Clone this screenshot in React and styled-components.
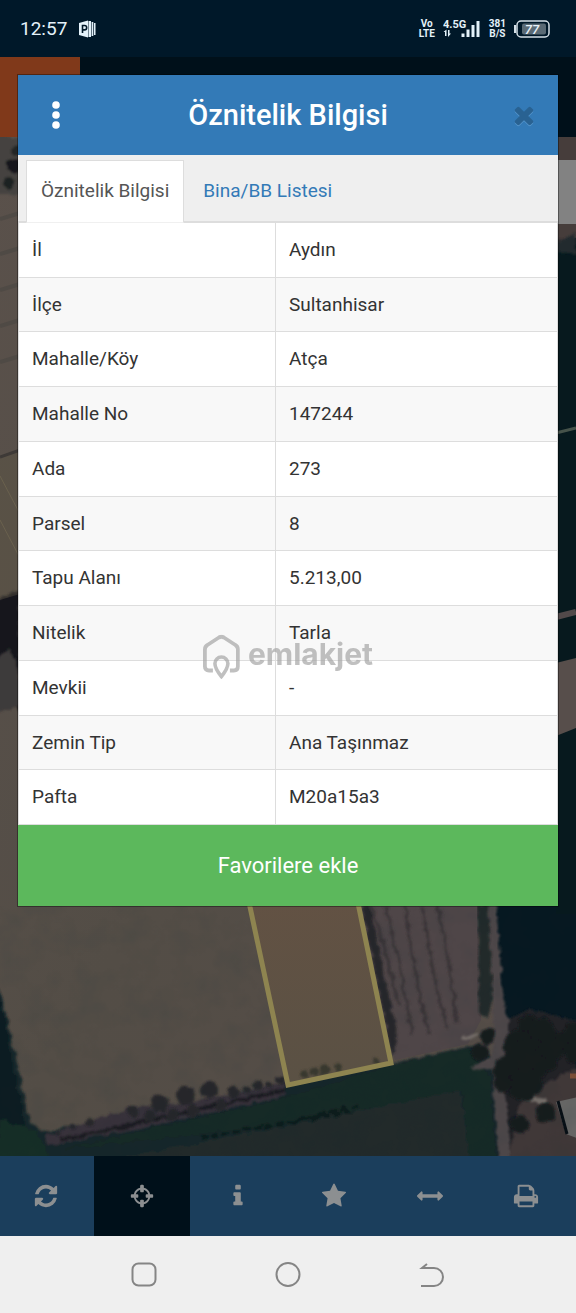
import React from "react";
import styled, { createGlobalStyle } from "styled-components";

const GlobalStyle = createGlobalStyle`
  *, *::before, *::after { box-sizing: border-box; }
  body { margin: 0; font-family: Roboto, "Noto Sans", sans-serif; color: #333; background: #001420; }
  button { font: inherit; border: 0; margin: 0; padding: 0; cursor: pointer; }
`;

const Screen = styled.div`
  position: relative;
  display: flex;
  flex-direction: column;
  min-height: 100vh;
`;

/* ---------- phone status bar ---------- */

const StatusBar = styled.header`
  display: flex;
  align-items: center;
  justify-content: space-between;
  height: 57px;
  padding: 0 26px 0 20px;
  background: #001829;
  color: #e4f2fa;
`;

const StatusGroup = styled.div`
  display: flex;
  align-items: center;
  gap: ${(p) => p.$gap}px;
`;

const Clock = styled.time`
  font-size: 19px;
  line-height: 24px;
`;

const StackedLabel = styled.span`
  display: flex;
  flex-direction: column;
  align-items: center;
  font-size: 10px;
  font-weight: 700;
  line-height: 10px;
`;

/* ---------- application behind the dialog ---------- */

const Stage = styled.main`
  flex: 1;
  display: grid;
`;

const AppLayer = styled.div`
  grid-area: 1 / 1;
  display: flex;
  flex-direction: column;
`;

const TopBar = styled.div`
  height: 80px;
  background: #00101a;
`;

const MenuBlock = styled.div`
  width: 80px;
  height: 80px;
  background: #80391a;
`;

const MapArea = styled.div`
  position: relative;
  flex: 1;
  overflow: hidden;
  background: #554f49;
`;

const MapDrawing = styled.svg`
  position: absolute;
  inset: 0;
  width: 100%;
  height: 100%;
`;

const Toolbar = styled.nav`
  background: #1b3e5c;
  overflow: hidden;
`;

const ToolbarGrid = styled.div`
  display: grid;
  grid-template-columns: repeat(6, 1fr);
  margin: 0 2px 0 -2px;
`;

const ToolButton = styled.button`
  display: flex;
  align-items: center;
  justify-content: center;
  height: 80px;
  background: ${(p) => (p.$active ? "#00101a" : "transparent")};
  color: #8c8f91;
`;

/* ---------- dialog ---------- */

const Dialog = styled.section`
  grid-area: 1 / 1;
  align-self: start;
  z-index: 1;
  margin: 18px 18px 0;
  background: #fff;
  box-shadow: 0 0 0 1px rgba(0, 0, 0, 0.35);
`;

const DialogHeader = styled.header`
  display: grid;
  grid-template-columns: 36px 1fr 36px;
  align-items: center;
  height: 80px;
  padding: 0 20px;
  background: #337ab7;
  color: #fff;
`;

const DialogTitle = styled.h1`
  margin: 0;
  text-align: center;
  font-size: 29px;
  font-weight: 500;
  line-height: 32px;
`;

const HeaderButton = styled.button`
  display: flex;
  height: 40px;
  align-items: center;
  justify-content: ${(p) => (p.$muted ? "flex-end" : "center")};
  background: none;
  color: ${(p) => (p.$muted ? "#296292" : "#fff")};
  filter: ${(p) => (p.$muted ? "drop-shadow(0 1px 0 #5595cb)" : "none")};
`;

const Tabs = styled.div`
  display: flex;
  align-items: flex-end;
  gap: 4px;
  height: 68px;
  padding: 0 8px;
  background: #efefef;
  border-bottom: 2px solid #ddd;
`;

const Tab = styled.button`
  height: 63px;
  margin-bottom: -2px;
  padding: 0 14px 2px;
  border: 1px solid ${(p) => (p.$active ? "#ddd" : "transparent")};
  border-bottom-color: ${(p) => (p.$active ? "#f0f0f0" : "transparent")};
  background: ${(p) => (p.$active ? "#fff" : "transparent")};
  color: ${(p) => (p.$active ? "#555" : "#337ab7")};
  font-size: 19px;
  line-height: 24px;
`;

const AttributeTable = styled.table`
  width: 100%;
  table-layout: fixed;
  border-collapse: separate;
  border-spacing: 0;
  border-left: 1px solid #ddd;
  border-right: 1px solid #ddd;
`;

const LabelColumn = styled.col`
  width: 257px;
`;

const Row = styled.tr`
  height: 55px;
  &:nth-child(4n + 2) { height: 54px; }
  &:nth-child(even) { background: #f8f8f8; }
`;

const Label = styled.th`
  padding: 0 13px;
  border-right: 1px solid #ddd;
  border-bottom: 1px solid #ddd;
  text-align: left;
  font-size: 19px;
  font-weight: 400;
  line-height: 24px;
`;

const Value = styled.td`
  padding: 0 13px;
  border-bottom: 1px solid #ddd;
  font-size: 19px;
  line-height: 24px;
`;

const FavouriteButton = styled.button`
  display: block;
  width: 100%;
  height: 81px;
  background: #5cb85c;
  color: #fff;
  font-size: 22px;
  line-height: 28px;
`;

/* ---------- watermark ---------- */

const Watermark = styled.div`
  position: absolute;
  top: 50%;
  left: 50%;
  z-index: 2;
  display: flex;
  align-items: flex-start;
  gap: 8px;
  transform: translate(-50%, -50%);
  color: #a6a6a6;
  opacity: 0.7;
  pointer-events: none;
  font-family: Inter, sans-serif;
  font-size: 30px;
  font-weight: 700;
  line-height: 38px;
`;

/* ---------- phone navigation ---------- */

const PhoneNav = styled.nav`
  display: grid;
  grid-template-columns: repeat(3, 1fr);
  height: 77px;
  padding: 0 12.5%;
  background: #efefef;
`;

const NavButton = styled.button`
  display: flex;
  align-items: center;
  justify-content: center;
  background: none;
  color: #858585;
`;

const GLYPHS = {
  refresh:
    "M1639 1056q0 5-1 7-64 268-268 434.5t-478 166.5q-146 0-282.5-55t-243.5-157l-129 129q-19 19-45 19t-45-19-19-45v-448q0-26 19-45t45-19h448q26 0 45 19t19 45-19 45l-137 137q71 66 161 102t187 36q134 0 250-65t186-179q11-17 53-117 8-23 30-23h192q13 0 22.500 9.500t9.500 22.500zm25-800v448q0 26-19 45t-45 19h-448q-26 0-45-19t-19-45 19-45l138-138q-148-137-349-137-134 0-250 65t-186 179q-11 17-53 117-8 23-30 23h-199q-13 0-22.500-9.500t-9.500-22.500v-7q65-268 270-434.500t480-166.500q146 0 284 55.500t245 156.500l130-129q19-19 45-19t45 19 19 45z",
  crosshairs:
    "M1325 1024h-109q-26 0-45-19t-19-45v-128q0-26 19-45t45-19h109q-32-108-112.500-188.500t-188.500-112.500v109q0 26-19 45t-45 19h-128q-26 0-45-19t-19-45v-109q-108 32-188.500 112.500t-112.500 188.500h109q26 0 45 19t19 45v128q0 26-19 45t-45 19h-109q32 108 112.500 188.500t188.500 112.500v-109q0-26 19-45t45-19h128q26 0 45 19t19 45v109q108-32 188.500-112.500t112.500-188.500zm339-192v128q0 26-19 45t-45 19h-143q-37 161-154.500 278.500t-278.500 154.500v143q0 26-19 45t-45 19h-128q-26 0-45-19t-19-45v-143q-161-37-278.500-154.500t-154.500-278.500h-143q-26 0-45-19t-19-45v-128q0-26 19-45t45-19h143q37-161 154.500-278.500t278.500-154.500v-143q0-26 19-45t45-19h128q26 0 45 19t19 45v143q161 37 278.500 154.500t154.500 278.500h143q26 0 45 19t19 45z",
  info:
    "M1216 1344v128q0 26-19 45t-45 19h-512q-26 0-45-19t-19-45v-128q0-26 19-45t45-19h64v-384h-64q-26 0-45-19t-19-45v-128q0-26 19-45t45-19h384q26 0 45 19t19 45v576h64q26 0 45 19t19 45zm-128-1152v192q0 26-19 45t-45 19h-256q-26 0-45-19t-19-45v-192q0-26 19-45t45-19h256q26 0 45 19t19 45z",
  star:
    "M1728 647q0 22-26 48l-363 354 86 500q1 7 1 20 0 21-10.500 35.500t-30.500 14.500q-19 0-40-12l-449-236-449 236q-22 12-40 12-21 0-31.500-14.500t-10.500-35.500q0-6 2-20l86-500-364-354q-25-27-25-48 0-37 56-46l502-73 225-455q19-41 49-41t49 41l225 455 502 73q56 9 56 46z",
  arrows:
    "M1792 896q0 26-19 45l-256 256q-19 19-45 19t-45-19-19-45v-128h-1024v128q0 26-19 45t-45 19-45-19l-256-256q-19-19-19-45t19-45l256-256q19-19 45-19t45 19 19 45v128h1024v-128q0-26 19-45t45-19 45 19l256 256q19 19 19 45z",
  print:
    "M448 1536h896v-256h-896v256zm0-640h896v-384h-160q-40 0-68-28t-28-68v-160h-640v640zm1152 64q0-26-19-45t-45-19-45 19-19 45 19 45 45 19 45-19 19-45zm128 0v416q0 13-9.500 22.500t-22.500 9.500h-224v160q0 40-28 68t-68 28h-960q-40 0-68-28t-28-68v-160h-224q-13 0-22.500-9.500t-9.500-22.500v-416q0-79 56.500-135.500t135.500-56.500h64v-544q0-40 28-68t68-28h672q40 0 88 20t76 48l152 152q28 28 48 76t20 88v256h64q79 0 135.500 56.500t56.500 135.500z",
  times:
    "M1490 1322q0 40-28 68l-136 136q-28 28-68 28t-68-28l-294-294-294 294q-28 28-68 28t-68-28l-136-136q-28-28-28-68t28-68l294-294-294-294q-28-28-28-68t28-68l136-136q28-28 68-28t68 28l294 294 294-294q28-28 68-28t68 28l136 136q28 28 28 68t-28 68l-294 294 294 294q28 28 28 68z",
};

const Glyph = ({ name, size = 26 }) => (
  <svg width={size} height={size} viewBox="0 0 1792 1792" fill="currentColor" aria-hidden="true">
    <path d={GLYPHS[name]} />
  </svg>
);

const tools = [
  { glyph: "refresh", label: "Yenile" },
  { glyph: "crosshairs", label: "Konum", active: true },
  { glyph: "info", label: "Bilgi" },
  { glyph: "star", label: "Favoriler" },
  { glyph: "arrows", label: "Ölçüm" },
  { glyph: "print", label: "Yazdır" },
];

const attributes = [
  ["İl", "Aydın"],
  ["İlçe", "Sultanhisar"],
  ["Mahalle/Köy", "Atça"],
  ["Mahalle No", "147244"],
  ["Ada", "273"],
  ["Parsel", "8"],
  ["Tapu Alanı", "5.213,00"],
  ["Nitelik", "Tarla"],
  ["Mevkii", "-"],
  ["Zemin Tip", "Ana Taşınmaz"],
  ["Pafta", "M20a15a3"],
];

const treeLine = [
  [58, 1133, 3], [72, 1128, 3], [90, 1122, 4], [134, 1111, 6], [150, 1117, 6],
  [159, 1104, 9], [172, 1115, 6], [186, 1096, 9], [193, 1111, 7], [209, 1090, 9],
  [221, 1105, 6], [234, 1093, 6], [247, 1090, 4], [258, 1086, 4], [269, 1085, 4],
  [281, 1080, 5],
];

const grove = [
  [530, 1026, 11], [541, 1034, 16], [519, 1045, 15], [510, 1072, 17], [528, 1060, 22],
  [525, 1084, 17], [546, 1058, 13], [562, 1043, 11], [574, 1034, 12], [551, 1049, 12],
  [503, 1084, 9], [488, 1036, 8], [480, 1052, 9], [545, 1112, 10], [520, 1124, 9],
  [574, 1054, 9],
];

const parcelTrees = [
  [304, 1074, 4], [314, 1072, 4], [325, 1069, 6], [338, 1068, 4], [376, 1060, 3],
];

const MapPicture = () => (
  <MapDrawing viewBox="0 137 576 1020" preserveAspectRatio="xMidYMin slice" aria-hidden="true">
    <defs>
      <filter id="rough" x="-5%" y="-5%" width="110%" height="110%">
        <feTurbulence type="fractalNoise" baseFrequency="0.12" numOctaves="3" seed="4" />
        <feDisplacementMap in="SourceGraphic" scale="7" xChannelSelector="R" yChannelSelector="G" />
        <feGaussianBlur stdDeviation="0.8" />
      </filter>
      <filter id="grain" x="0" y="0" width="100%" height="100%">
        <feTurbulence type="fractalNoise" baseFrequency="0.04" numOctaves="4" seed="8" />
        <feColorMatrix values="0 0 0 0 0  0 0 0 0 0.02  0 0 0 0 0.03  0.9 0 0 0 -0.36" />
      </filter>
      <linearGradient id="soil" x1="0" y1="0" x2="1" y2="1">
        <stop offset="0" stopColor="#5a514b" />
        <stop offset="0.5" stopColor="#534d46" />
        <stop offset="1" stopColor="#564d48" />
      </linearGradient>
      <linearGradient id="parcel" x1="0" y1="0" x2="0" y2="1">
        <stop offset="0" stopColor="#655243" />
        <stop offset="1" stopColor="#5a5144" />
      </linearGradient>
    </defs>
    <rect x="0" y="137" width="576" height="1020" fill="url(#soil)" />

    {/* strip left of the dialog */}
    <g filter="url(#rough)">
      <rect x="-5" y="137" width="26" height="58" fill="#45423f" />
      <circle cx="14" cy="166" r="7" fill="#15191b" />
      <circle cx="9" cy="183" r="6" fill="#1c2021" />
      <circle cx="17" cy="151" r="5" fill="#242627" />
      <path d="M-5 600L20 590V715L10 690L-5 670z" fill="#14191e" />
      <path d="M-4 660l14 -12l14 40v16l-28 10z" fill="#3d3a3a" />
    </g>
    <path d="M0 219l20-6M0 254l20-6M0 290l20-6M0 326l20-6M0 362l20-6" stroke="#4f4a45" strokeWidth="4" />
    <path d="M0 456l20-6v144l-20 6z" fill="#5d5444" opacity="0.4" />
    <path d="M0 457l20-7" stroke="#3e3a37" strokeWidth="3" />
    <path d="M0 476l20 38M0 520l20 38" stroke="#6a614e" strokeWidth="1" />

    {/* ground below the large field */}
    <g filter="url(#rough)">
      <path d="M-6 975L3 1000L12 1040L30 1122L42 1132L120 1117L200 1101L286 1083L392 1063L480 1044L500 1070V1170H-6z" fill="#18282a" />
      <path d="M-6 985L2 1005L22 1110L34 1165H-6z" fill="#101c22" />
      <path d="M45 1136L130 1108L200 1100L286 1082V1096L160 1124L48 1146z" fill="#37323a" />
      <path d="M60 1140L160 1118L286 1090" stroke="#1c1c22" strokeWidth="4" fill="none" />
      <path d="M110 1160L285 1126L460 1090L470 1160z" fill="#202b2c" />
      <path d="M395 1064L468 1048L490 1078L495 1160H470L462 1090L286 1124L60 1150L286 1098z" fill="#162925" />
      <path d="M0 1120L36 1130L52 1160H-4z" fill="#142d27" />
      <path d="M200 1138l90-16 70-17M290 1122l60-10" stroke="#0f1d1c" strokeWidth="4" strokeDasharray="8 3" fill="none" />
    </g>

    {/* striped field */}
    <path d="M362 906H478L481 1020L468 1044L395 1060L384 1020z" fill="#4f4648" />
    <path d="M362 906L371 907L384 975L398 1035L392 1056z" fill="#272629" filter="url(#rough)" />
    <path
      d="M385 906L399 960L412 1034M405 906L413 960L429 1034M422 906L433 970L446 1028M438 906L449 965L457 1022M371 906L385 950L399 1006"
      fill="none"
      stroke="#3b3638"
      strokeWidth="3"
      filter="url(#rough)"
    />

    {/* right-hand fields, road and yard */}
    <path d="M494 906H576V1157H502L504 1044L500 985z" fill="#071821" />
    <path d="M504 1020L530 1010L576 1020V1157H498L500 1060z" fill="#222426" filter="url(#rough)" />
    <path d="M486 900H496L502 985L512 1044L502 1066L506 1100L512 1160H498L493 1070L470 1068L492 1056L494 1020z" fill="#4d4748" filter="url(#rough)" />
    <path d="M478 906H488L493 1000L486 1020L479 1010z" fill="#222a2c" filter="url(#rough)" />
    <path d="M522 1098L548 1082L580 1066V1160H508L516 1120z" fill="#403739" filter="url(#rough)" />
    <path d="M556 1102L582 1096V1140L566 1134z" fill="#666665" />
    <path d="M558 1101L567 1134" stroke="#080f15" strokeWidth="3" />
    <path d="M526 1098l20 3M462 1038l16-2" stroke="#786f6b" strokeWidth="4" filter="url(#rough)" />
    <path d="M570 1076h8" stroke="#7b4f38" strokeWidth="5" />

    {/* strip right of the dialog */}
    <rect x="556" y="224" width="20" height="690" fill="#07191e" />
    <path d="M556 137H576V238L556 246z" fill="#463d3b" />
    <path d="M556 242L576 232V256L556 252z" fill="#202a2e" filter="url(#rough)" />
    <path d="M556 433L576 428" stroke="#46524a" strokeWidth="3" />
    <path d="M556 617L576 612" stroke="#51494a" strokeWidth="6" />
    <path d="M556 663L576 658V728L556 736z" fill="#574e4b" />
    <rect x="556" y="160" width="20" height="64" fill="#828282" />

    <g fill="#131a1d" filter="url(#rough)">
      {treeLine.map(([x, y, r]) => (
        <circle key={`${x}-${y}`} cx={x} cy={y} r={r} fill="#25272a" />
      ))}
      {grove.map(([x, y, r]) => (
        <circle key={`${x}-${y}`} cx={x} cy={y} r={r} />
      ))}
    </g>

    <rect x="0" y="906" width="576" height="251" filter="url(#grain)" opacity="0.15" />

    {/* selected parcel */}
    <path d="M240 860L288 1085L391 1063L345 840z" fill="url(#parcel)" />
    <g fill="#37382f" filter="url(#rough)">
      {parcelTrees.map(([x, y, r]) => (
        <circle key={x} cx={x} cy={y} r={r} />
      ))}
    </g>
    <path d="M240 860L288 1085L391 1063L345 840z" fill="none" stroke="#8e8450" strokeWidth="5" />
  </MapDrawing>
);

const PresentationIcon = () => (
  <svg width="18" height="18" viewBox="0 0 18 18" aria-hidden="true">
    <path d="M0 3L9 0.500V17.500L0 15z" fill="#e4f2fa" />
    <path d="M9.500 1H12V17H9.500zM12.600 2H14.300V16H12.600zM15 3H16.500V15H15z" fill="#e4f2fa" />
    <path d="M3.500 13V5.500h2a2.200 2.200 0 0 1 0 4.400H3.500" fill="none" stroke="#001829" strokeWidth="1.600" />
  </svg>
);

const SignalIcon = () => (
  <svg width="38" height="20" viewBox="0 0 38 20" fill="currentColor" role="img" aria-label="4.5G">
    <text x="0" y="9" fontSize="11" fontWeight="700">4.5G</text>
    <path d="M2 17V13H0.500L3.500 10.500V17zM5 11H6.500V14.500H8L5 18z" />
    <path d="M18.500 14.500h3V18h-3zM23.500 10.500h3V18h-3zM28.500 6h3v12h-3zM33.500 2h3v16h-3z" />
  </svg>
);

const BatteryIcon = () => (
  <svg width="36" height="18" viewBox="0 0 36 18" role="img" aria-label="77">
    <rect x="3" y="1" width="32" height="16" rx="4" fill="none" stroke="#d5e0e7" strokeWidth="1.500" />
    <rect x="8" y="3.500" width="24" height="11" rx="2" fill="#5a6a75" />
    <path d="M1 5v8" stroke="#d5e0e7" strokeWidth="2" />
    <text x="18" y="13.500" fontSize="13" fontWeight="500" fontStyle="italic" fill="#e8f2f8" textAnchor="middle">77</text>
  </svg>
);

const DotsIcon = () => (
  <svg width="8" height="28" viewBox="0 0 8 28" fill="currentColor" aria-hidden="true">
    <circle cx="4" cy="4" r="3.800" />
    <circle cx="4" cy="14" r="3.800" />
    <circle cx="4" cy="24" r="3.800" />
  </svg>
);

const HousePin = () => (
  <svg width="37" height="45" viewBox="0 0 37 45" fill="none" stroke="currentColor" aria-hidden="true">
    <path d="M10 36H6Q2 36 2 32V15Q2 12 4.500 10.500L16 3Q18.500 1.500 21 3L32.500 10.500Q35 12 35 15V32Q35 36 31 36H27" strokeWidth="3.800" />
    <path d="M18.500 42Q12 34 12 29A6.500 6.500 0 0 1 25 29Q25 34 18.500 42z" strokeWidth="3.600" />
  </svg>
);

export default function App() {
  return (
    <Screen>
      <GlobalStyle />
      <StatusBar>
        <StatusGroup $gap={12}>
          <Clock>12:57</Clock>
          <PresentationIcon />
        </StatusGroup>
        <StatusGroup $gap={8}>
          <StackedLabel>
            <span>Vo</span>
            <span>LTE</span>
          </StackedLabel>
          <SignalIcon />
          <StackedLabel>
            <span>381</span>
            <span>B/S</span>
          </StackedLabel>
          <BatteryIcon />
        </StatusGroup>
      </StatusBar>

      <Stage>
        <AppLayer>
          <TopBar>
            <MenuBlock />
          </TopBar>
          <MapArea>
            <MapPicture />
          </MapArea>
          <Toolbar>
            <ToolbarGrid>
              {tools.map((tool) => (
                <ToolButton key={tool.glyph} type="button" $active={tool.active} aria-label={tool.label}>
                  <Glyph name={tool.glyph} />
                </ToolButton>
              ))}
            </ToolbarGrid>
          </Toolbar>
        </AppLayer>

        <Dialog role="dialog" aria-labelledby="dialog-title">
          <DialogHeader>
            <HeaderButton type="button" aria-label="Menü">
              <DotsIcon />
            </HeaderButton>
            <DialogTitle id="dialog-title">Öznitelik Bilgisi</DialogTitle>
            <HeaderButton type="button" $muted aria-label="Kapat">
              <Glyph name="times" size={28} />
            </HeaderButton>
          </DialogHeader>
          <Tabs role="tablist">
            <Tab type="button" role="tab" aria-selected="true" $active>Öznitelik Bilgisi</Tab>
            <Tab type="button" role="tab" aria-selected="false">Bina/BB Listesi</Tab>
          </Tabs>
          <AttributeTable>
            <colgroup>
              <LabelColumn />
              <col />
            </colgroup>
            <tbody>
              {attributes.map(([label, value]) => (
                <Row key={label}>
                  <Label scope="row">{label}</Label>
                  <Value>{value}</Value>
                </Row>
              ))}
            </tbody>
          </AttributeTable>
          <FavouriteButton type="button">Favorilere ekle</FavouriteButton>
        </Dialog>
      </Stage>

      <PhoneNav>
        <NavButton type="button" aria-label="Son uygulamalar">
          <svg width="26" height="26" viewBox="0 0 26 26" fill="none" stroke="currentColor" strokeWidth="2">
            <rect x="1.500" y="1.500" width="23" height="22" rx="6" />
          </svg>
        </NavButton>
        <NavButton type="button" aria-label="Ana ekran">
          <svg width="26" height="26" viewBox="0 0 26 26" fill="none" stroke="currentColor" strokeWidth="2">
            <circle cx="13" cy="12.500" r="11.500" />
          </svg>
        </NavButton>
        <NavButton type="button" aria-label="Geri">
          <svg width="26" height="26" viewBox="0 0 26 26" fill="none" stroke="currentColor" strokeWidth="2">
            <path d="M2 24H15A9 9 0 0 0 15 6H3L8 2" />
          </svg>
        </NavButton>
      </PhoneNav>

      <Watermark>
        <HousePin />
        <span>emlakjet</span>
      </Watermark>
    </Screen>
  );
}
